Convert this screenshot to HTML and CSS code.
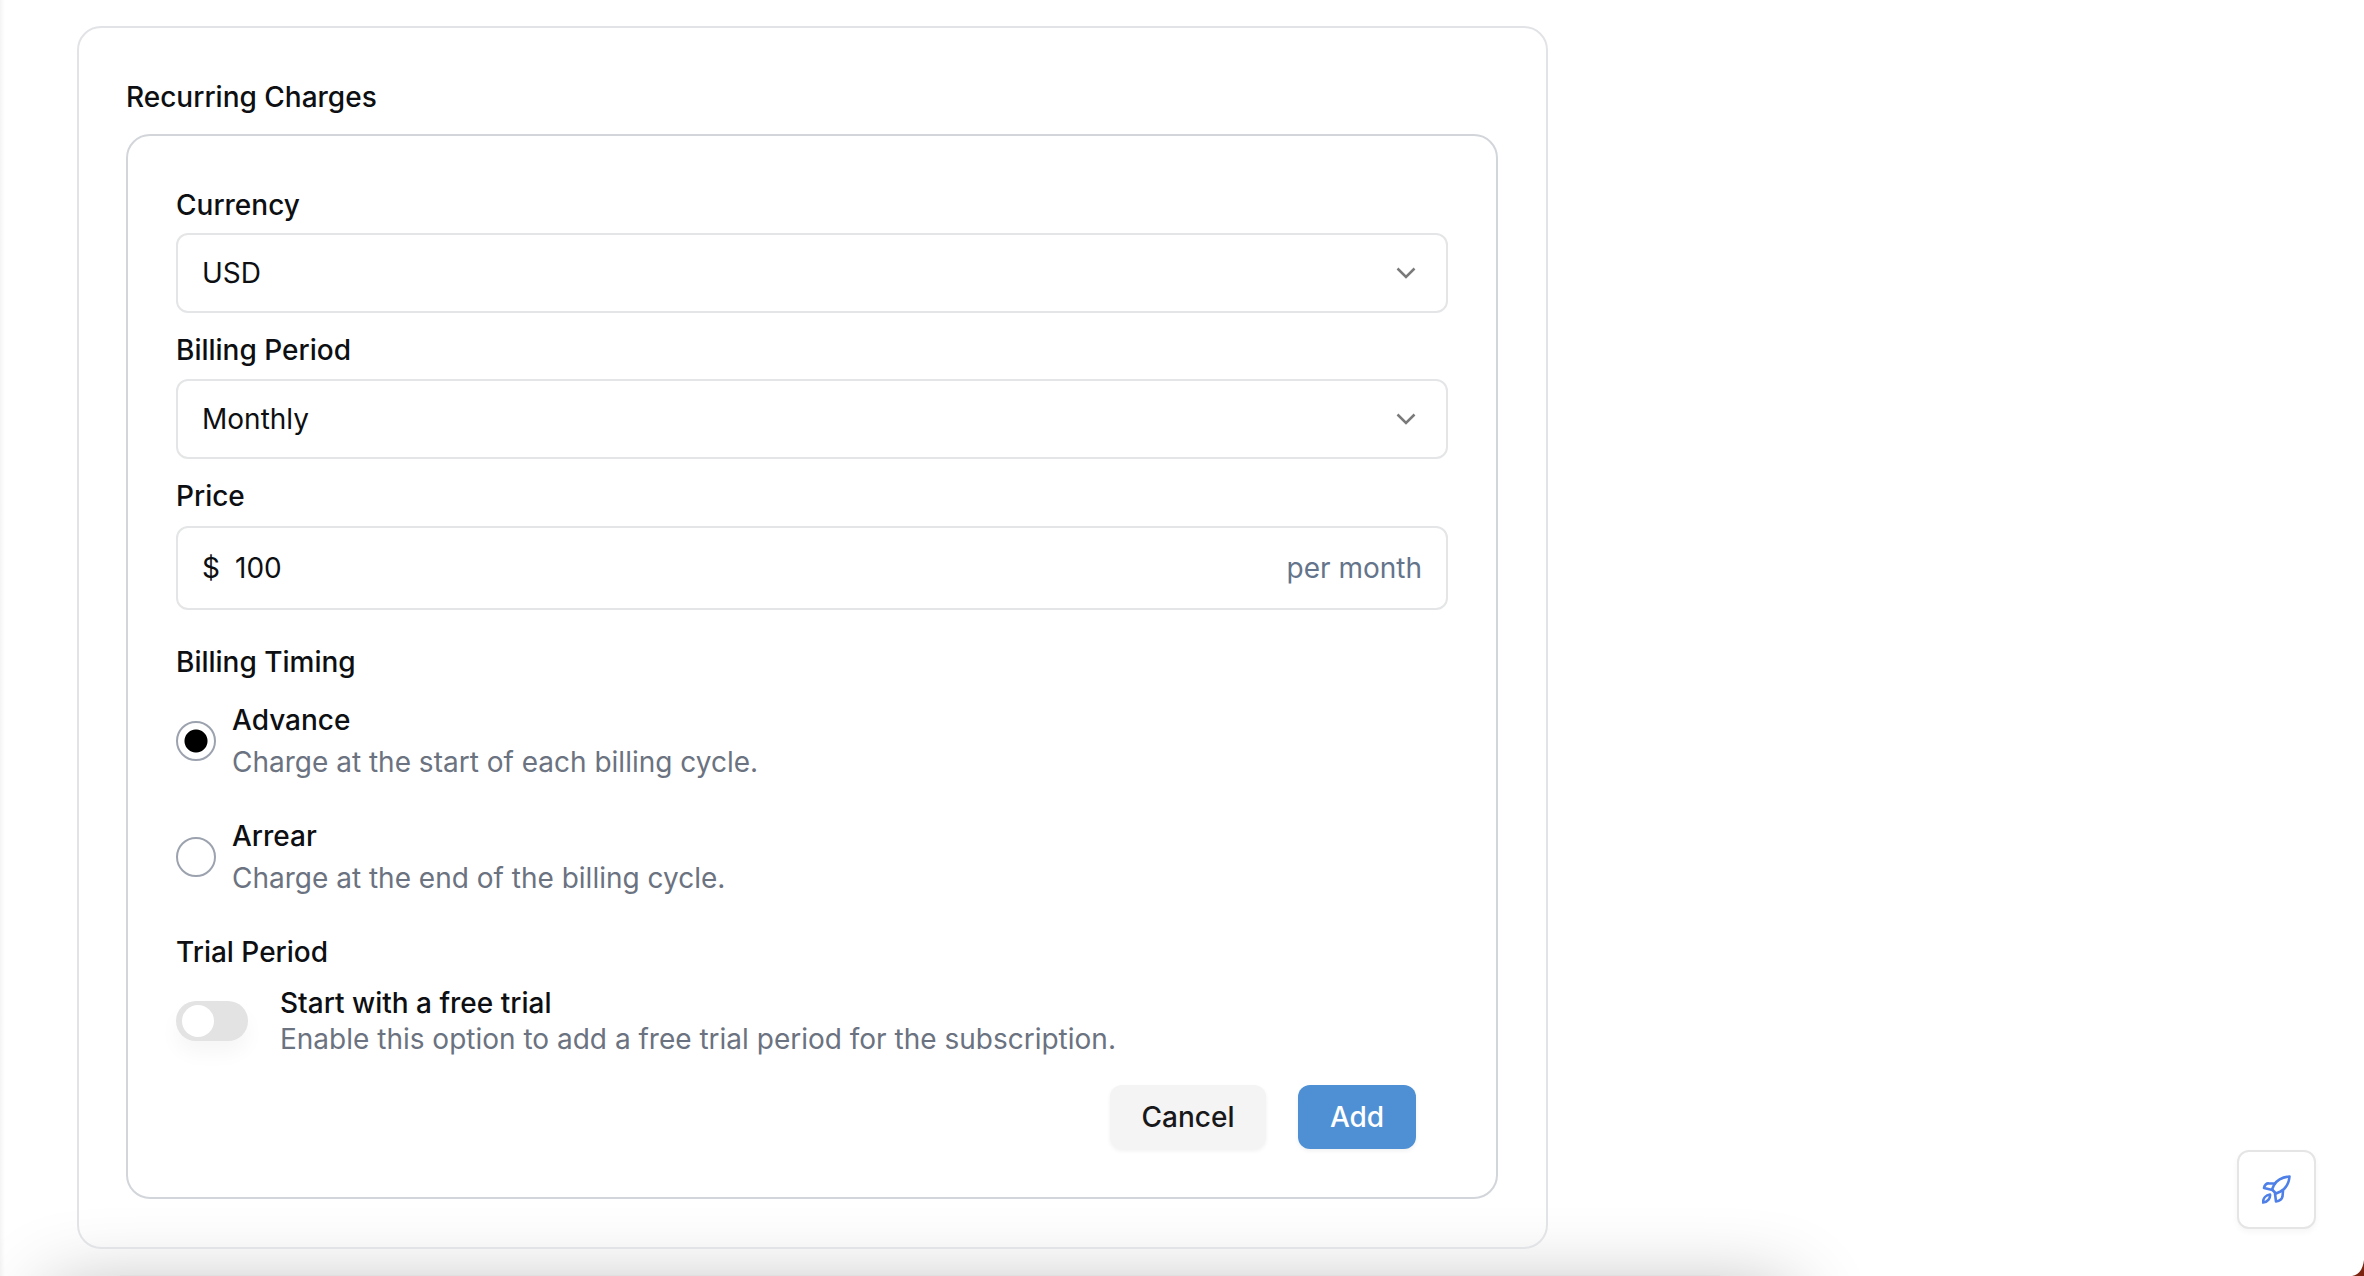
FILE: index.html
```html
<!DOCTYPE html>
<html lang="en">
<head>
<meta charset="utf-8">
<title>Recurring Charges</title>
<link rel="stylesheet" href="styles.css">
</head>
<body>
<div class="edge"></div>
<div class="glow"></div>
<main class="card">
  <h2 class="title">Recurring Charges</h2>
  <section class="panel">
    <div class="label">Currency</div>
    <div class="field">
      <span class="grow">USD</span>
      <svg class="chev" viewBox="0 0 20 12"><path d="M1.500 1.500 10 10l8.500-8.500"/></svg>
    </div>
    <div class="label next">Billing Period</div>
    <div class="field">
      <span class="grow">Monthly</span>
      <svg class="chev" viewBox="0 0 20 12"><path d="M1.500 1.500 10 10l8.500-8.500"/></svg>
    </div>
    <div class="label next">Price</div>
    <div class="field price">
      <span class="cur">$</span>
      <span class="grow">100</span>
      <span class="unit">per month</span>
    </div>
    <div class="label timing">Billing Timing</div>
    <div class="radio-row first">
      <span class="radio on"></span>
      <div>
        <div class="opt">Advance</div>
        <div class="desc">Charge at the start of each billing cycle.</div>
      </div>
    </div>
    <div class="radio-row">
      <span class="radio"></span>
      <div>
        <div class="opt">Arrear</div>
        <div class="desc">Charge at the end of the billing cycle.</div>
      </div>
    </div>
    <div class="label trial">Trial Period</div>
    <div class="toggle-row">
      <span class="toggle"><span class="knob"></span></span>
      <div>
        <div class="opt tight">Start with a free trial</div>
        <div class="desc tight">Enable this option to add a free trial period for the subscription.</div>
      </div>
    </div>
    <div class="actions">
      <button class="btn cancel">Cancel</button>
      <button class="btn add">Add</button>
    </div>
  </section>
</main>
<button class="rocket" aria-label="Launch">
  <svg viewBox="0 0 30 30" width="30" height="30"><path d="M27.500 1.500C21 2 15 5 12 10l-2 4.500 4 4 4.500-2C24 13.500 27 8 27.500 1.500Z"/><path d="M13 8.500H7C4.500 8 2.500 10 2 13l8.500 2"/><path d="M13 18.500l1 8c3-.5 6-2.500 6.500-5L21 16"/><path d="M1 27.500C1 23 4 20 8 19.500 8.500 23 6 27 1 27.500Z"/></svg>
</button>
<svg class="corner" viewBox="0 0 12 16"><path d="M12 0v16H0C7 15 11 9 12 0Z"/></svg>
</body>
</html>
```

FILE: styles.css
```css
* { box-sizing: border-box; }

html {
  height: 100%;
  overflow: hidden;
}

body {
  height: 1276px;
  margin: 0;
  position: relative;
  overflow: hidden;
  background: #fff;
  color: #0d0f12;
  font-family: Inter, "Liberation Sans", sans-serif;
  font-size: 28px;
  padding: 26px 0 0 77px;
}

.edge {
  position: absolute;
  left: 0;
  top: 0;
  bottom: 0;
  width: 5px;
  background: linear-gradient(90deg, #f4f4f5, #fff);
}

.glow {
  position: absolute;
  left: 120px;
  width: 1600px;
  top: 1275px;
  height: 1px;
  background: #e0e0e1;
  box-shadow: 0 86px 80px 70px rgba(0, 0, 0, .3);
}

.card {
  position: relative;
  width: 1471px;
  height: 1223px;
  padding: 49px 47px 0;
  border: 2px solid #e2e3e6;
  border-radius: 24px;
}

.title {
  margin: 0 0 17px;
  height: 40px;
  font-size: 28px;
  line-height: 40px;
  font-weight: 500;
}

.panel {
  width: 1372px;
  height: 1065px;
  padding: 49px 48px 0;
  background: #fff;
  border: 2px solid #d2d5da;
  border-radius: 24px;
}

.label {
  height: 40px;
  line-height: 40px;
  font-weight: 500;
  margin-bottom: 8px;
}

.next { margin-top: 17px; margin-bottom: 9px; }
.timing { margin-top: 32px; margin-bottom: 0; }
.trial { margin-top: 17px; margin-bottom: 0; }

.field {
  display: flex;
  align-items: center;
  height: 80px;
  padding: 0 24px;
  border: 2px solid #e4e5e7;
  border-radius: 12px;
}

.price { height: 84px; margin-top: 10px; }
.grow { flex: 1; }
.cur { width: 33px; }
.unit { color: #64748b; }

.chev {
  width: 20px;
  height: 12px;
  margin-right: 6px;
  fill: none;
  stroke: #7a7a7a;
  stroke-width: 2.5;
}

.radio-row {
  display: flex;
  align-items: center;
  gap: 16px;
  height: 116px;
}

.radio-row.first { margin-top: 1px; }

.radio {
  flex: none;
  width: 40px;
  height: 40px;
  border: 2px solid #9ca3af;
  border-radius: 50%;
  background: #fff;
}

.radio.on {
  background: radial-gradient(circle, #000 0 11px, #fff 12px);
}

.opt { line-height: 40px; height: 40px; font-weight: 500; }
.desc { line-height: 44px; height: 42px; color: #6b7280; }
.opt.tight { height: 36px; line-height: 36px; }
.desc.tight { height: 36px; line-height: 36px; }

.toggle-row {
  display: flex;
  align-items: center;
  gap: 32px;
  margin-top: 13px;
  height: 72px;
}

.toggle {
  display: flex;
  align-items: center;
  flex: none;
  width: 72px;
  height: 40px;
  padding: 0 6px;
  background: #e3e3e3;
  border-radius: 20px;
  box-shadow: 0 12px 20px rgba(0, 0, 0, .04);
}

.knob {
  width: 32px;
  height: 32px;
  background: #fff;
  border-radius: 50%;
}

.actions {
  display: flex;
  justify-content: flex-end;
  gap: 32px;
  margin-top: 28px;
  padding-right: 32px;
}

.btn {
  height: 64px;
  border: 0;
  border-radius: 12px;
  font: 500 28px Inter, "Liberation Sans", sans-serif;
  box-shadow: 0 2px 4px rgba(0, 0, 0, .06);
}

.cancel { width: 156px; background: #f4f4f4; color: #18181b; }
.add { width: 118px; background: #4f90d5; color: #fff; }

.rocket {
  position: absolute;
  left: 2237px;
  top: 1150px;
  display: flex;
  align-items: center;
  justify-content: center;
  width: 79px;
  height: 79px;
  padding: 0;
  background: #fff;
  border: 2px solid #e5e5e5;
  border-radius: 12px;
  box-shadow: 0 3px 6px rgba(0, 0, 0, .04);
}

.rocket svg {
  fill: none;
  stroke: #4f80e8;
  stroke-width: 2.6;
  stroke-linejoin: round;
  stroke-linecap: round;
}

.corner {
  position: absolute;
  right: 0;
  bottom: 0;
  width: 12px;
  height: 16px;
  fill: #7c2410;
}
```
